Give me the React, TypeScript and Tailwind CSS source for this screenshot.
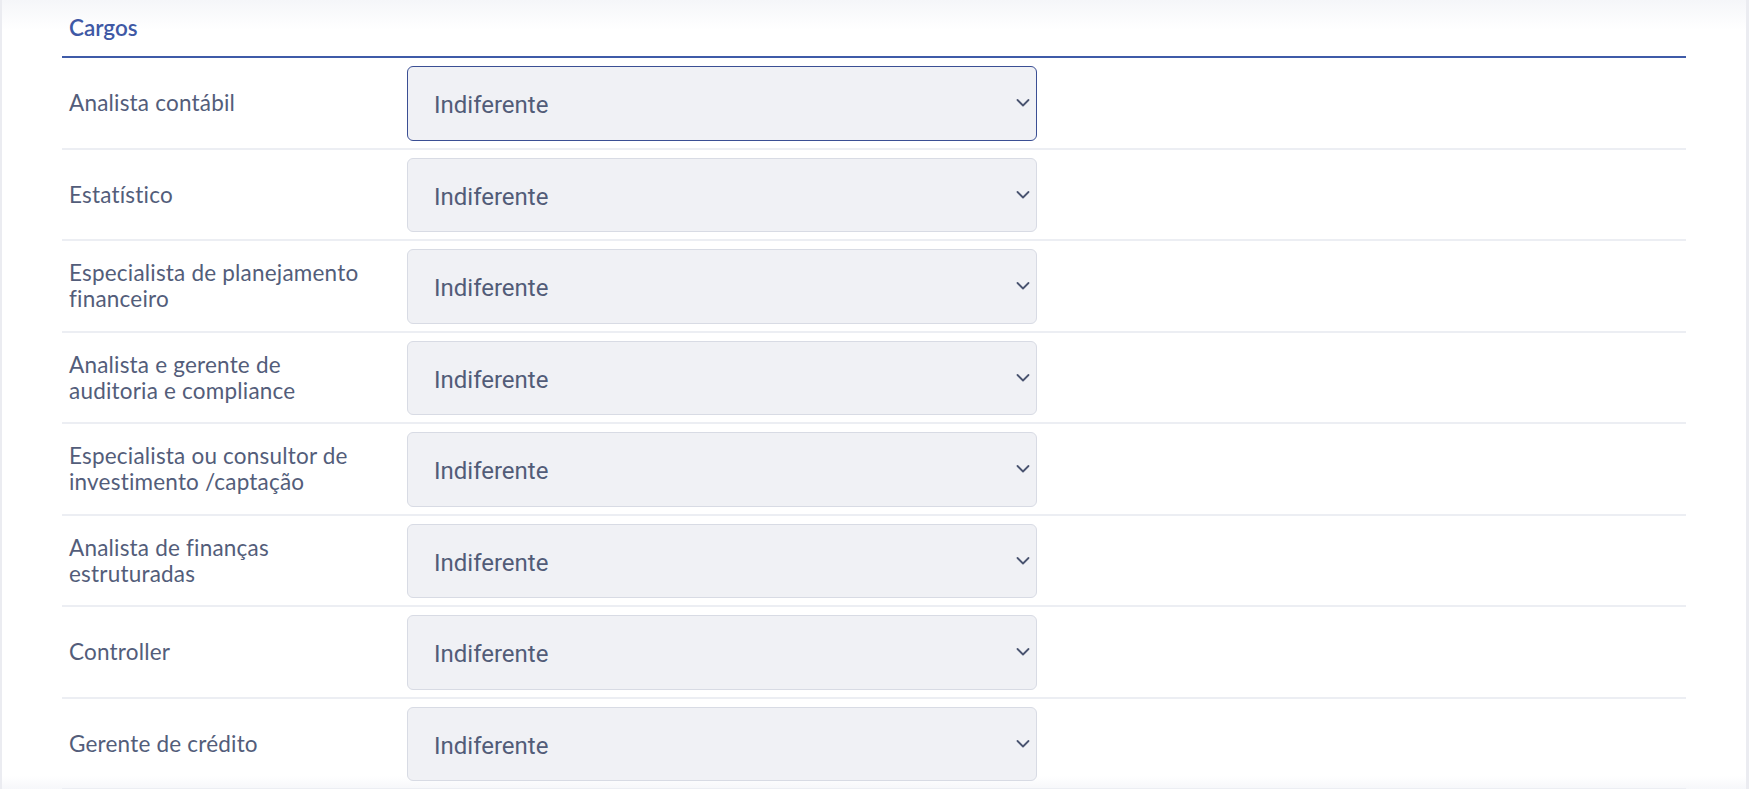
import React from 'react';

const cargos: string[][] = [
  ['Analista contábil'],
  ['Estatístico'],
  ['Especialista de planejamento', 'financeiro'],
  ['Analista e gerente de', 'auditoria e compliance'],
  ['Especialista ou consultor de', 'investimento /captação'],
  ['Analista de finanças', 'estruturadas'],
  ['Controller'],
  ['Gerente de crédito'],
];

const Chevron: React.FC = () => (
  <svg
    className="pointer-events-none absolute right-[7px] top-1/2 -translate-y-1/2"
    width="14"
    height="9"
    viewBox="0 0 14 9"
    fill="none"
  >
    <path d="M1.5 1.5L7 7L12.5 1.5" stroke="#4a5470" strokeWidth="1.8" strokeLinecap="round" strokeLinejoin="round" />
  </svg>
);

const CargoRow: React.FC<{ lines: string[]; focused?: boolean }> = ({ lines, focused = false }) => (
  <div className="flex items-center border-b-2 border-[#eceef3] pt-[8px] pb-[7px]">
    <div className="w-[345px] shrink-0 pl-[7px] text-[22.5px] leading-[26px] tracking-[0.2px] text-[#535d7a]">
      {lines.map((l) => (
        <div key={l}>{l}</div>
      ))}
    </div>
    <div className="relative w-[630px]">
      <select
        defaultValue="Indiferente"
        className={`h-[74.5px] w-full appearance-none rounded-[6px] border bg-[#f0f1f5] pt-[4px] pl-[26px] pr-10 text-[24px] text-[#525c78] outline-none ${
          focused ? 'border-[#3b4f94]' : 'border-[#d8dbe4]'
        }`}
        style={{ fontFamily: 'Roboto, sans-serif' }}
      >
        <option>Indiferente</option>
        <option>Sim</option>
        <option>Não</option>
      </select>
      <Chevron />
    </div>
  </div>
);

export default function App() {
  return (
    <div
      className="h-[789px] overflow-hidden border-l-2 border-r-[3px] border-[#ebecf1] bg-[linear-gradient(to_bottom,#f5f6f9_0px,#ffffff_30px,#ffffff_776px,#f6f7fa_789px)] px-[60px]"
      style={{ fontFamily: 'Lato, "Liberation Sans", sans-serif' }}
    >
      <div className="border-b-2 border-[#3f5ba8] pt-[13px] pb-[13px] pl-[7px]">
        <h2 className="text-[22.5px] font-semibold leading-[30px] text-[#3f59a5]">Cargos</h2>
      </div>
      {cargos.map((lines, i) => (
        <CargoRow key={lines.join(' ')} lines={lines} focused={i === 0} />
      ))}
    </div>
  );
}
